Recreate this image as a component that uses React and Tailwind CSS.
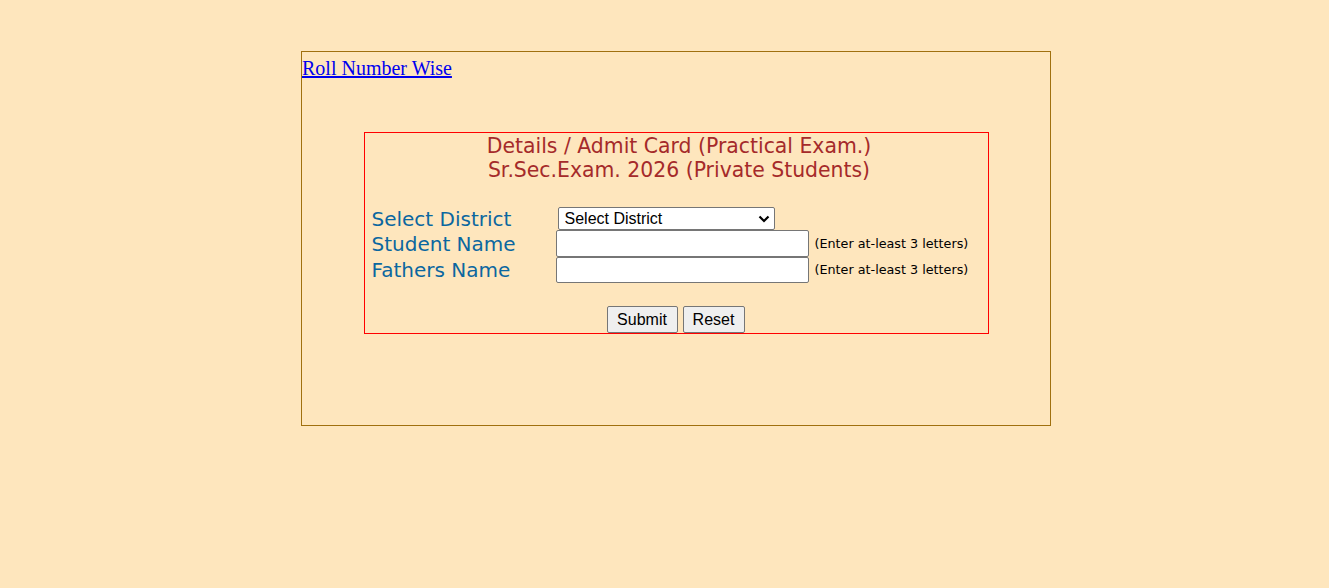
import React from "react";

const labelCls = "text-[20px] leading-[26px] text-[#0b67a0] w-[184px] shrink-0";
const hintCls = "text-[12.75px] text-black ml-[6px]";

const App = () => {
  return (
    <div className="min-h-[588px] bg-[#fee6bd] pt-[51px] font-['DejaVu_Sans',Verdana,sans-serif]">
      <div className="ml-[301px] w-[750px] h-[375px] border border-[#a0700f] flex flex-col">
        <div className="h-[80px]">
          <a
            href="#"
            className="font-['Liberation_Serif',serif] text-[20px] leading-[32px] text-[#0000ee] underline"
          >
            Roll Number Wise
          </a>
        </div>
        <div className="mx-auto w-[625px] h-[202px] border border-[#ff0000] flex flex-col">
          <div className="text-center text-[#a52a2a] text-[20.4px] leading-[24px] pt-[1px] pl-[6px]">
            <div>Details / Admit Card (Practical Exam.)</div>
            <div>Sr.Sec.Exam. 2026 (Private Students)</div>
          </div>
          <div className="mt-[25px] pl-[7px] flex flex-col">
            <div className="flex items-center h-[23px]">
              <span className={labelCls}>Select District</span>
              <div className="relative ml-[2px]">
                <select className="appearance-none w-[217px] h-[23px] bg-white border border-[#767676] rounded-[2px] pl-[6px] font-['Liberation_Sans',Arial,sans-serif] text-[16px] leading-[20px] text-black">
                  <option>Select District</option>
                </select>
                <svg
                  className="pointer-events-none absolute right-[5px] top-[7px] w-[12px] h-[10px]"
                  viewBox="0 0 12 10"
                  fill="none"
                  stroke="black"
                  strokeWidth="2.2"
                >
                  <path d="M1.5 2.5 L6 7 L10.5 2.5" />
                </svg>
              </div>
            </div>
            <div className="flex items-center h-[27px]">
              <span className={labelCls}>Student Name</span>
              <input
                type="text"
                className="w-[253px] h-[27px] bg-white border border-[#767676] rounded-[2px]"
              />
              <span className={hintCls}>(Enter at-least 3 letters)</span>
            </div>
            <div className="flex items-center h-[26px]">
              <span className={labelCls}>Fathers Name</span>
              <input
                type="text"
                className="w-[253px] h-[26px] bg-white border border-[#767676] rounded-[2px]"
              />
              <span className={hintCls}>(Enter at-least 3 letters)</span>
            </div>
          </div>
          <div className="mt-[23px] flex justify-center gap-[5px] pr-[1px] font-['Liberation_Sans',Arial,sans-serif] text-[16px]">
            <button className="h-[27px] w-[71px] bg-[#efefef] border border-[#767676] rounded-[2px] text-black">
              Submit
            </button>
            <button className="h-[27px] w-[62px] bg-[#efefef] border border-[#767676] rounded-[2px] text-black">
              Reset
            </button>
          </div>
        </div>
      </div>
    </div>
  );
};

export default App;
